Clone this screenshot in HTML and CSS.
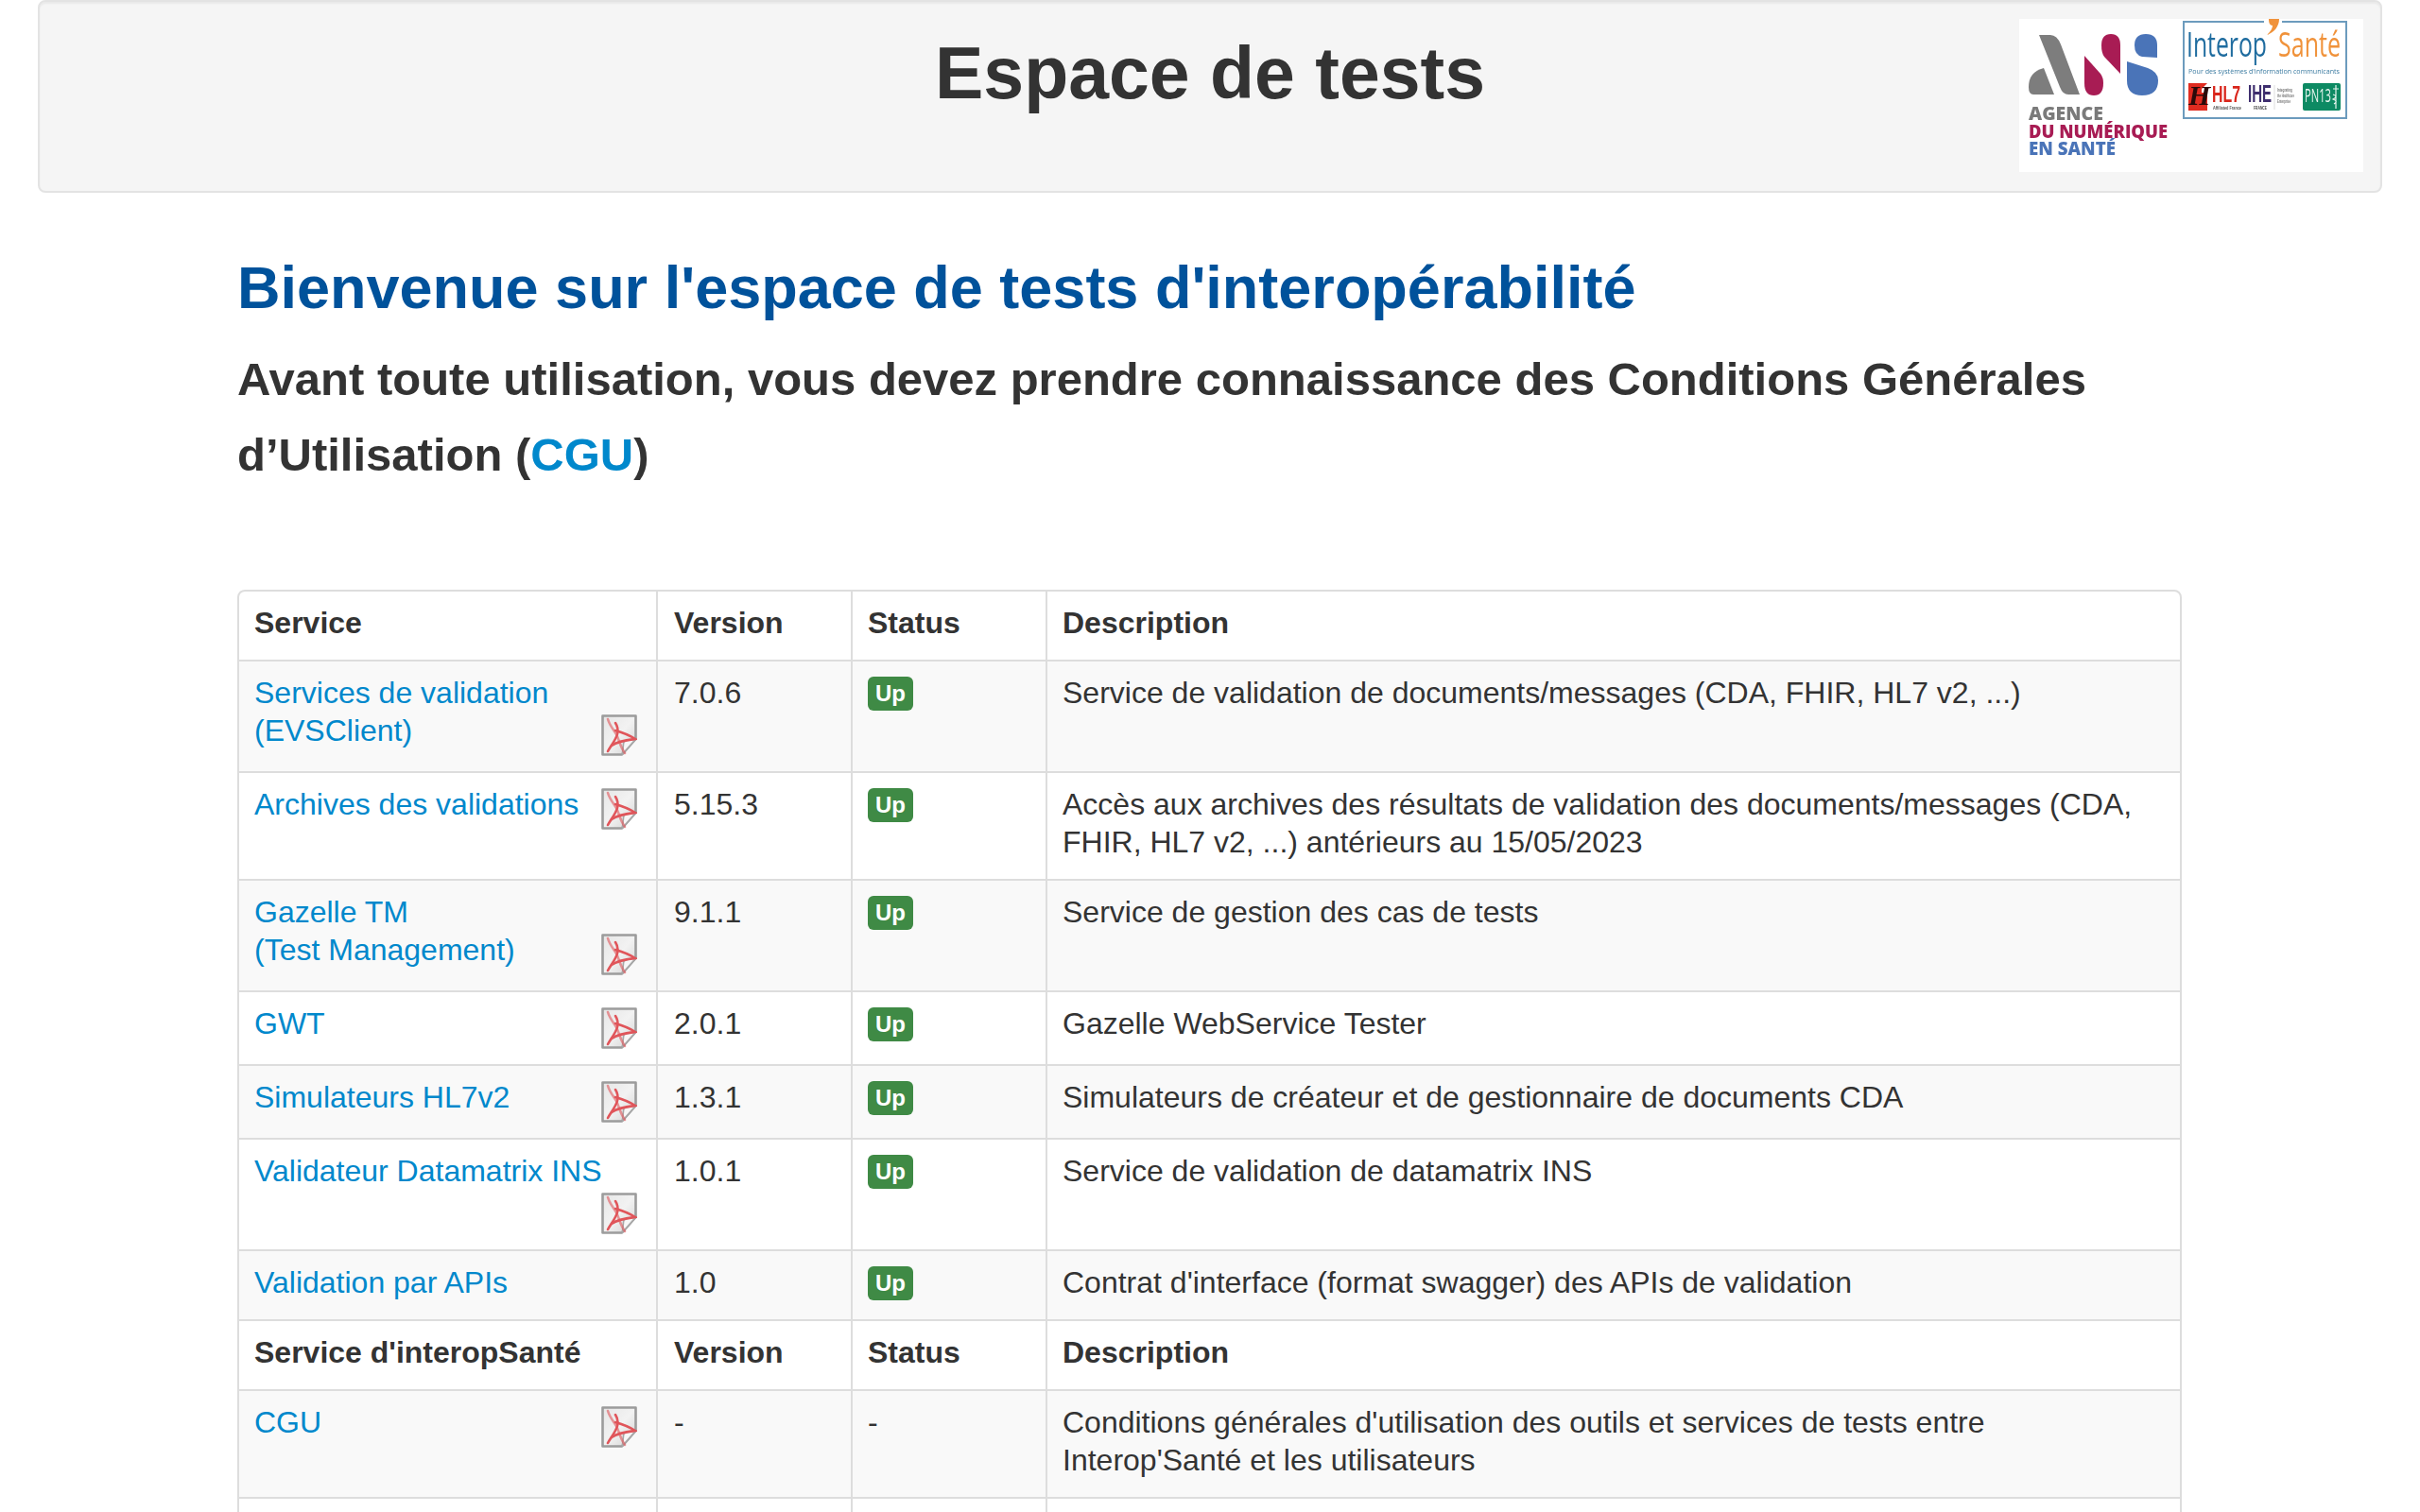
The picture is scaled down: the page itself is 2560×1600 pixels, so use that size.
FILE: index.html
```html
<!DOCTYPE html>
<html lang="fr">
<head>
<meta charset="utf-8">
<title>Espace de tests</title>
<link rel="stylesheet" href="styles.css">
</head>
<body>
<svg class="defs" width="0" height="0" aria-hidden="true">
  <defs>
    <linearGradient id="pg" x1="0" y1="0" x2="1" y2="1"><stop offset="0" stop-color="#e6e6e6"/><stop offset=".5" stop-color="#f2f2f2"/><stop offset="1" stop-color="#d0d0d0"/></linearGradient>
    <symbol id="pdf" viewBox="0 0 38 44">
      <g class="soft-icon">
        <path d="M1.5 1.5H36.5V26L22 42.5H1.5Z" fill="url(#pg)" stroke="#9c9c9c" stroke-width="2.6" stroke-linejoin="round"/>
        <path d="M36.5 26L22 42.5C23.5 37 23 32 24 29C27 26 31 27.5 36.5 26Z" fill="#f7f7f7" stroke="#a8a8a8" stroke-width="1.6"/>
        <g fill="none" stroke="#e0555a" stroke-width="2.6" stroke-linecap="round">
          <path d="M7 5C9 12 13 16 16 21C19 27 20 34 25 41" opacity=".6"/>
          <path d="M7 39C10 33 15 28 17 21C18 17 17 12 15 9"/>
          <path d="M15 17C22 19 30 22 36 26C28 27 18 28 11 33"/>
        </g>
      </g>
    </symbol>
  </defs>
</svg>

<header class="well">
  <div class="spacer"></div>
  <h1 class="site-title">Espace de tests</h1>
  <svg class="logos" viewBox="0 0 364 162" width="364" height="162" role="img" aria-label="Logos ANS et Interop'Santé">
    <rect width="364" height="162" fill="#fff"/>
    <g class="soft">
      <path d="M21 17H33Q40 17 44 27L64 80H52Q46 80 43 72Z" fill="#7d7d7d"/>
      <path d="M26 52L37 80H15Q10 80 10 72Q10 56 26 52Z" fill="#7d7d7d"/>
      <path d="M97 16Q107 16 107 28V58L90 40Q87 36 87 28Q87 16 97 16Z" fill="#a81c54"/>
      <path d="M69 39L86 58Q89 62 89 68Q89 81 79 81Q69 81 69 68Z" fill="#a81c54"/>
      <path d="M134 16Q146 16 146 28V41L130 40Q122 38 122 28Q122 16 134 16Z" fill="#4a74b8"/>
      <path d="M114 45L136 52Q147 56 147 65Q147 81 130 81Q114 81 114 65Z" fill="#4a74b8"/>
      <text class="ans" x="10" y="107" textLength="79" lengthAdjust="spacingAndGlyphs" fill="#7a7a7a">AGENCE</text>
      <text class="ans" x="10" y="126" textLength="147" lengthAdjust="spacingAndGlyphs" fill="#a81c54">DU NUMÉRIQUE</text>
      <text class="ans" x="10" y="144" textLength="92" lengthAdjust="spacingAndGlyphs" fill="#4a74b8">EN SANTÉ</text>

      <path d="M259 3H174V105H346V3H278" fill="none" stroke="#6c9bbd" stroke-width="2"/>
      <text class="io" x="177" y="40" textLength="85" lengthAdjust="spacingAndGlyphs" fill="#1f6c9f">Interop</text>
      <text class="io" x="274" y="40" textLength="66" lengthAdjust="spacingAndGlyphs" fill="#f0923a">Santé</text>
      <path d="M264 0H275C275 8 270 14 262 17C266 13 268 10 268 7C265 7 264 4 264 0Z" fill="#f0923a"/>
      <text class="tag" x="179" y="58" textLength="160" lengthAdjust="spacingAndGlyphs" fill="#3a7aa0">Pour des systèmes d'information communicants</text>
      <path d="M179 68H199L193 74V97H179Z" fill="#e02b20"/>
      <rect x="193" y="78" width="6" height="19" fill="#e02b20"/>
      <text class="hl" x="179" y="91" fill="#2a0a0a">H</text>
      <text class="hl7" x="204" y="88" textLength="30" lengthAdjust="spacingAndGlyphs" fill="#d9261c">HL7</text>
      <text class="tiny" x="205" y="96" textLength="30" lengthAdjust="spacingAndGlyphs" fill="#555">Affiliated France</text>
      <text class="ihe" x="242" y="88" textLength="25" lengthAdjust="spacingAndGlyphs" fill="#3f2f6f">IHE</text>
      <text class="tiny" x="248" y="96" textLength="14" lengthAdjust="spacingAndGlyphs" fill="#444">FRANCE</text>
      <path d="M270 70V96" stroke="#ddd" fill="none"/>
      <text class="tiny" x="273" y="77" textLength="16" lengthAdjust="spacingAndGlyphs" fill="#777">Integrating</text>
      <text class="tiny" x="273" y="83" textLength="18" lengthAdjust="spacingAndGlyphs" fill="#777">the Healthcare</text>
      <text class="tiny" x="273" y="89" textLength="14" lengthAdjust="spacingAndGlyphs" fill="#777">Enterprise</text>
      <rect x="300" y="68" width="40" height="29" rx="2" fill="#0d8a63"/>
      <text class="pn" x="302" y="88" textLength="28" lengthAdjust="spacingAndGlyphs" fill="#e8f5ef">PN13</text>
      <path d="M335 70V95M332 74H338M332 80Q338 82 332 85Q338 87 333 90" stroke="#e8f5ef" stroke-width="1.2" fill="none"/>
    </g>
  </svg>
</header>

<main class="content">
  <h2 class="welcome">Bienvenue sur l'espace de tests d'interopérabilité</h2>
  <h3 class="notice">Avant toute utilisation, vous devez prendre connaissance des Conditions Générales d’Utilisation (<a href="#">CGU</a>)</h3>

  <table class="services">
    <colgroup><col class="c-service"><col class="c-version"><col class="c-status"><col class="c-desc"></colgroup>
    <thead>
      <tr><th>Service</th><th>Version</th><th>Status</th><th>Description</th></tr>
    </thead>
    <tbody>
      <tr>
        <td><a href="#">Services de validation<br>(EVSClient)</a><svg class="pdf"><use href="#pdf"/></svg></td>
        <td>7.0.6</td><td><span class="label">Up</span></td>
        <td>Service de validation de documents/messages (CDA, FHIR, HL7 v2, ...)</td>
      </tr>
      <tr>
        <td><a href="#">Archives des validations</a><svg class="pdf"><use href="#pdf"/></svg></td>
        <td>5.15.3</td><td><span class="label">Up</span></td>
        <td>Accès aux archives des résultats de validation des documents/messages (CDA, FHIR, HL7 v2, ...) antérieurs au 15/05/2023</td>
      </tr>
      <tr>
        <td><a href="#">Gazelle TM<br>(Test Management)</a><svg class="pdf"><use href="#pdf"/></svg></td>
        <td>9.1.1</td><td><span class="label">Up</span></td>
        <td>Service de gestion des cas de tests</td>
      </tr>
      <tr>
        <td><a href="#">GWT</a><svg class="pdf"><use href="#pdf"/></svg></td>
        <td>2.0.1</td><td><span class="label">Up</span></td>
        <td>Gazelle WebService Tester</td>
      </tr>
      <tr>
        <td><a href="#">Simulateurs HL7v2</a><svg class="pdf"><use href="#pdf"/></svg></td>
        <td>1.3.1</td><td><span class="label">Up</span></td>
        <td>Simulateurs de créateur et de gestionnaire de documents CDA</td>
      </tr>
      <tr>
        <td><a href="#">Validateur Datamatrix INS</a><svg class="pdf"><use href="#pdf"/></svg></td>
        <td>1.0.1</td><td><span class="label">Up</span></td>
        <td>Service de validation de datamatrix INS</td>
      </tr>
      <tr>
        <td><a href="#">Validation par APIs</a></td>
        <td>1.0</td><td><span class="label">Up</span></td>
        <td>Contrat d'interface (format swagger) des APIs de validation</td>
      </tr>
      <tr class="subhead"><th>Service d'interopSanté</th><th>Version</th><th>Status</th><th>Description</th></tr>
      <tr>
        <td><a href="#">CGU</a><svg class="pdf"><use href="#pdf"/></svg></td>
        <td>-</td><td>-</td>
        <td>Conditions générales d'utilisation des outils et services de tests entre Interop'Santé et les utilisateurs</td>
      </tr>
      <tr><td>&nbsp;</td><td></td><td></td><td></td></tr>
    </tbody>
  </table>
</main>
</body>
</html>
```
FILE: styles.css
```css
html, body {
  margin: 0;
  padding: 0;
  height: 1600px;
  overflow: hidden;
  background: #fff;
  font-family: "Liberation Sans", Arial, sans-serif;
  color: #333;
}
.defs { position: absolute; }
a { color: #0088cc; text-decoration: none; }

.well {
  box-sizing: border-box;
  height: 204px;
  margin: 0 40px;
  padding: 18px;
  display: grid;
  grid-template-columns: 1fr auto 1fr;
  background: #f5f5f5;
  border: 2px solid #e3e3e3;
  border-radius: 8px;
  box-shadow: inset 0 2px 2px rgba(0, 0, 0, .05);
}
.site-title {
  margin: 17px 0 0;
  font-size: 77px;
  line-height: 80px;
  font-weight: 700;
  color: #333;
}
.logos { justify-self: end; display: block; }
.soft { filter: blur(.55px); }
.soft-icon { filter: blur(.5px); }
.ans { font-family: "Open Sans", sans-serif; font-weight: 800; font-size: 19px; }
.io { font-family: "Open Sans", sans-serif; font-weight: 400; font-size: 36px; }
.tag { font-family: "Open Sans", sans-serif; font-size: 8px; }
.hl { font-family: "Liberation Serif", serif; font-weight: 700; font-style: italic; font-size: 30px; }
.hl7 { font-family: "Liberation Sans", sans-serif; font-weight: 700; font-size: 24px; }
.ihe { font-family: "Liberation Sans", sans-serif; font-weight: 700; font-size: 26px; }
.tiny { font-family: "Liberation Sans", sans-serif; font-weight: 700; font-size: 4.5px; }
.pn { font-family: "Open Sans", sans-serif; font-size: 20px; }

.content {
  width: 2057px;
  margin-left: 251px;
}
.welcome {
  margin: 67px 0 0;
  font-size: 63px;
  line-height: 66px;
  font-weight: 700;
  color: #00529b;
}
.notice {
  margin: 24px 0 0;
  font-size: 49px;
  line-height: 80px;
  font-weight: 700;
  color: #333;
}
.services {
  width: 2057px;
  margin-top: 103px;
  table-layout: fixed;
  border-collapse: separate;
  border-spacing: 0;
  border: 2px solid #ddd;
  border-radius: 8px;
  font-size: 32px;
  line-height: 40px;
}
.c-service { width: 441px; }
.c-version { width: 206px; }
.c-status { width: 206px; }
th, td {
  padding: 13px 16px 19px;
  text-align: left;
  vertical-align: top;
  border-left: 2px solid #ddd;
  border-top: 2px solid #ddd;
}
th:first-child, td:first-child { border-left: 0; }
th:nth-child(2), td:nth-child(2) { padding-left: 17px; }
thead th { border-top: 0; }
tbody tr:nth-child(odd) { background: #f9f9f9; }
tbody tr.subhead { background: #fff; }
.pdf {
  float: right;
  width: 38px;
  height: 44px;
  margin: 3px 4px -3px 0;
}
.label {
  display: inline-block;
  padding: 4px 8px;
  font-size: 24px;
  line-height: 28px;
  font-weight: 700;
  color: #fff;
  background: #3f8a45;
  border-radius: 6px;
  vertical-align: 2px;
}
```
